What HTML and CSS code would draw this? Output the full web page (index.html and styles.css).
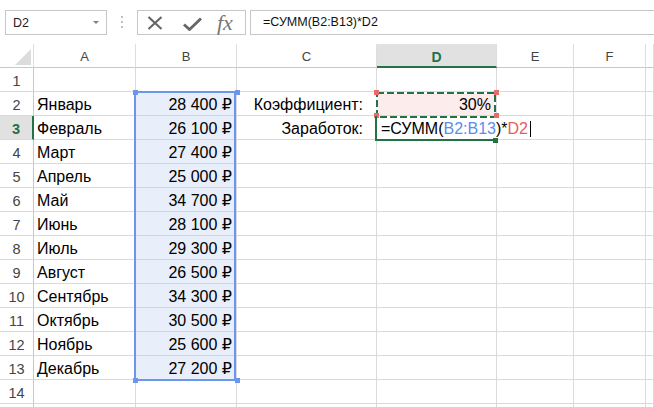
FILE: index.html
```html
<!DOCTYPE html>
<html lang="ru">
<head>
<meta charset="utf-8">
<title>Excel</title>
<link rel="stylesheet" href="styles.css">
</head>
<body>
<div class="toolbar">
  <div class="namebox"><span>D2</span><span class="caret"></span></div>
  <div class="grip"><i></i><i></i><i></i></div>
  <div class="fnbox">
    <svg class="ic-x" width="16" height="14" viewBox="0 0 16 14"><path d="M1.5 1 L14.5 13 M14.5 1 L1.5 13" stroke="#666" stroke-width="2.2" fill="none"/></svg>
    <svg class="ic-ok" width="19" height="14" viewBox="0 0 19 14"><path d="M1 7.5 L6.5 12.5 L18 1.5" stroke="#666" stroke-width="2.8" fill="none"/></svg>
    <span class="fx">fx</span>
  </div>
  <div class="formula">=СУММ(B2:B13)*D2</div>
</div>

<div class="sheet">
  <div class="c h corner"><span class="tri"></span></div>
  <div class="c h">A</div>
  <div class="c h">B</div>
  <div class="c h">C</div>
  <div class="c h on">D</div>
  <div class="c h">E</div>
  <div class="c h">F</div>
  <div class="c h"></div>

  <div class="c rh">1</div><div class="c"></div><div class="c"></div><div class="c"></div><div class="c"></div><div class="c"></div><div class="c"></div><div class="c"></div>

  <div class="c rh">2</div><div class="c">Январь</div><div class="c s r">28 400 ₽</div><div class="c r lbl">Коэффициент:</div><div class="c r p">30%</div><div class="c"></div><div class="c"></div><div class="c"></div>

  <div class="c rh on">3</div><div class="c">Февраль</div><div class="c s r">26 100 ₽</div><div class="c r lbl">Заработок:</div><div class="c ed">=СУММ(<span class="bl">B2:B13</span>)*<span class="rd">D2</span><span class="cur"></span></div><div class="c"></div><div class="c"></div>

  <div class="c rh">4</div><div class="c">Март</div><div class="c s r">27 400 ₽</div><div class="c"></div><div class="c"></div><div class="c"></div><div class="c"></div><div class="c"></div>
  <div class="c rh">5</div><div class="c">Апрель</div><div class="c s r">25 000 ₽</div><div class="c"></div><div class="c"></div><div class="c"></div><div class="c"></div><div class="c"></div>
  <div class="c rh">6</div><div class="c">Май</div><div class="c s r">34 700 ₽</div><div class="c"></div><div class="c"></div><div class="c"></div><div class="c"></div><div class="c"></div>
  <div class="c rh">7</div><div class="c">Июнь</div><div class="c s r">28 100 ₽</div><div class="c"></div><div class="c"></div><div class="c"></div><div class="c"></div><div class="c"></div>
  <div class="c rh">8</div><div class="c">Июль</div><div class="c s r">29 300 ₽</div><div class="c"></div><div class="c"></div><div class="c"></div><div class="c"></div><div class="c"></div>
  <div class="c rh">9</div><div class="c">Август</div><div class="c s r">26 500 ₽</div><div class="c"></div><div class="c"></div><div class="c"></div><div class="c"></div><div class="c"></div>
  <div class="c rh">10</div><div class="c">Сентябрь</div><div class="c s r">34 300 ₽</div><div class="c"></div><div class="c"></div><div class="c"></div><div class="c"></div><div class="c"></div>
  <div class="c rh">11</div><div class="c">Октябрь</div><div class="c s r">30 500 ₽</div><div class="c"></div><div class="c"></div><div class="c"></div><div class="c"></div><div class="c"></div>
  <div class="c rh">12</div><div class="c">Ноябрь</div><div class="c s r">25 600 ₽</div><div class="c"></div><div class="c"></div><div class="c"></div><div class="c"></div><div class="c"></div>
  <div class="c rh">13</div><div class="c">Декабрь</div><div class="c s r">27 200 ₽</div><div class="c"></div><div class="c"></div><div class="c"></div><div class="c"></div><div class="c"></div>
  <div class="c rh">14</div><div class="c"></div><div class="c"></div><div class="c"></div><div class="c"></div><div class="c"></div><div class="c"></div><div class="c"></div>
  <div class="c rh"></div><div class="c"></div><div class="c"></div><div class="c"></div><div class="c"></div><div class="c"></div><div class="c"></div><div class="c"></div>

  <div class="selbox"></div>
  <span class="hd blue tl"></span><span class="hd blue tr"></span><span class="hd blue lb"></span><span class="hd blue br"></span>

  <svg class="marquee" width="120" height="26" viewBox="0 0 120 26">
    <rect x="1" y="1" width="118" height="24" fill="none" stroke="#ffffff" stroke-width="2"/>
    <rect x="1" y="1" width="118" height="24" fill="none" stroke="#217346" stroke-width="2" stroke-dasharray="7 3"/>
  </svg>
  <span class="hd red r1"></span><span class="hd red r2"></span><span class="hd red r3"></span><span class="hd red r4"></span>

  <div class="active"></div>
  <span class="hd green g1"></span>
</div>
</body>
</html>
```

FILE: styles.css
```css
html, body {
  margin: 0;
  padding: 0;
  background: #ffffff;
}
body {
  width: 654px;
  height: 407px;
  overflow: hidden;
  font-family: "Liberation Sans", "DejaVu Sans", Arial, sans-serif;
  color: #000;
}

/* ---------- formula bar ---------- */
.toolbar {
  height: 44px;
  box-sizing: border-box;
  padding-top: 10px;
  display: flex;
  align-items: flex-start;
}
.namebox {
  margin-left: 5px;
  width: 102px;
  height: 25px;
  box-sizing: border-box;
  border: 1px solid #c6c6c6;
  display: flex;
  align-items: center;
  justify-content: space-between;
  padding: 0 7px 0 7px;
  font-size: 12.5px;
  color: #222;
}
.caret {
  width: 0;
  height: 0;
  border-left: 3px solid transparent;
  border-right: 3px solid transparent;
  border-top: 3px solid #808080;
}
.grip {
  margin: 6px 0 0 14px;
  width: 2px;
  display: flex;
  flex-direction: column;
  gap: 3px;
}
.grip i {
  display: block;
  width: 2px;
  height: 2px;
  background: #c2c2c2;
}
.fnbox {
  margin-left: 14px;
  width: 109px;
  height: 25px;
  box-sizing: border-box;
  border: 1px solid #c6c6c6;
  display: flex;
  align-items: center;
  padding-left: 9px;
}
.ic-x { margin-top: 1px; }
.ic-ok { margin-left: 20px; margin-top: 3px; }
.fx {
  margin-left: 15px;
  font-family: "Liberation Serif", "DejaVu Serif", serif;
  font-style: italic;
  font-size: 22px;
  color: #777;
  line-height: 20px;
}
.formula {
  margin-left: 4px;
  flex: 1;
  height: 25px;
  box-sizing: border-box;
  border: 1px solid #c6c6c6;
  border-right: none;
  padding-left: 12px;
  font-size: 12.5px;
  line-height: 23px;
  color: #111;
  white-space: nowrap;
}

/* ---------- sheet grid ---------- */
.sheet {
  position: relative;
  display: grid;
  grid-template-columns: 34px 102px 101px 140px 120px 77px 72px 1fr;
  grid-auto-rows: 24px;
}
.c {
  box-sizing: border-box;
  border-right: 1px solid #dadada;
  border-bottom: 1px solid #dadada;
  display: flex;
  align-items: flex-end;
  padding: 0 4px 1px 3px;
  font-size: 16px;
  line-height: 18px;
  white-space: nowrap;
}
.r { justify-content: flex-end; }
.lbl { padding-right: 13px; }
.s {
  background: #e9eefb;
  border-bottom-color: #ccd5e6;
}
.p {
  background: #fcecec;
  padding-right: 5px;
}

/* headers */
.h {
  justify-content: center;
  align-items: center;
  padding: 3px 0 0 0;
  font-size: 13px;
  color: #444;
  border-right-color: #dedede;
  border-bottom-color: #c8c8c8;
}
.h.on {
  background: #e1e1e1;
  color: #217346;
  font-weight: bold;
  font-size: 14px;
  border-bottom: 2px solid #217346;
}
.corner {
  justify-content: flex-end;
  align-items: flex-end;
  padding: 0 2px 2px 0;
}
.tri {
  display: block;
  width: 16px;
  height: 16px;
  background: #dcdcdc;
  clip-path: polygon(100% 0, 100% 100%, 0 100%);
}
.rh {
  justify-content: center;
  padding: 0 0 1px 0;
  font-size: 14.5px;
  color: #444;
  border-right-color: #c8c8c8;
}
.rh.on {
  background: #e1e1e1;
  color: #217346;
  font-weight: bold;
  border-right: 2px solid #217346;
}

/* editing cell D3, overflows into E3 */
.ed {
  grid-column: span 2;
  padding-left: 4px;
}
.bl { color: #5b8def; }
.rd { color: #e85c5c; }
.cur {
  display: inline-block;
  width: 1px;
  height: 16px;
  background: #000;
  margin-left: 2px;
  margin-bottom: 1px;
}

/* ---------- overlays ---------- */
.selbox {
  position: absolute;
  left: 134px;
  top: 47px;
  width: 102px;
  height: 290px;
  box-sizing: border-box;
  border: 2px solid #6a96ec;
}
.hd {
  position: absolute;
  width: 5px;
  height: 5px;
}
.blue { background: #6a96ec; }
.red { background: #e86b6b; }
.green { background: #217346; }
.tl { left: 133px; top: 46px; }
.tr { left: 235px; top: 46px; }
.lb { left: 133px; top: 334px; }
.br { left: 235px; top: 334px; }

.marquee {
  position: absolute;
  left: 376px;
  top: 48px;
}
.r1 { left: 374px; top: 46px; }
.r2 { left: 494px; top: 46px; }
.r3 { left: 374px; top: 69px; }
.r4 { left: 494px; top: 69px; }

.active {
  position: absolute;
  left: 375px;
  top: 72px;
  width: 122px;
  height: 25px;
  box-sizing: border-box;
  border-left: 2px solid #217346;
  border-bottom: 2px solid #217346;
}
.g1 { left: 493px; top: 94px; }
```
